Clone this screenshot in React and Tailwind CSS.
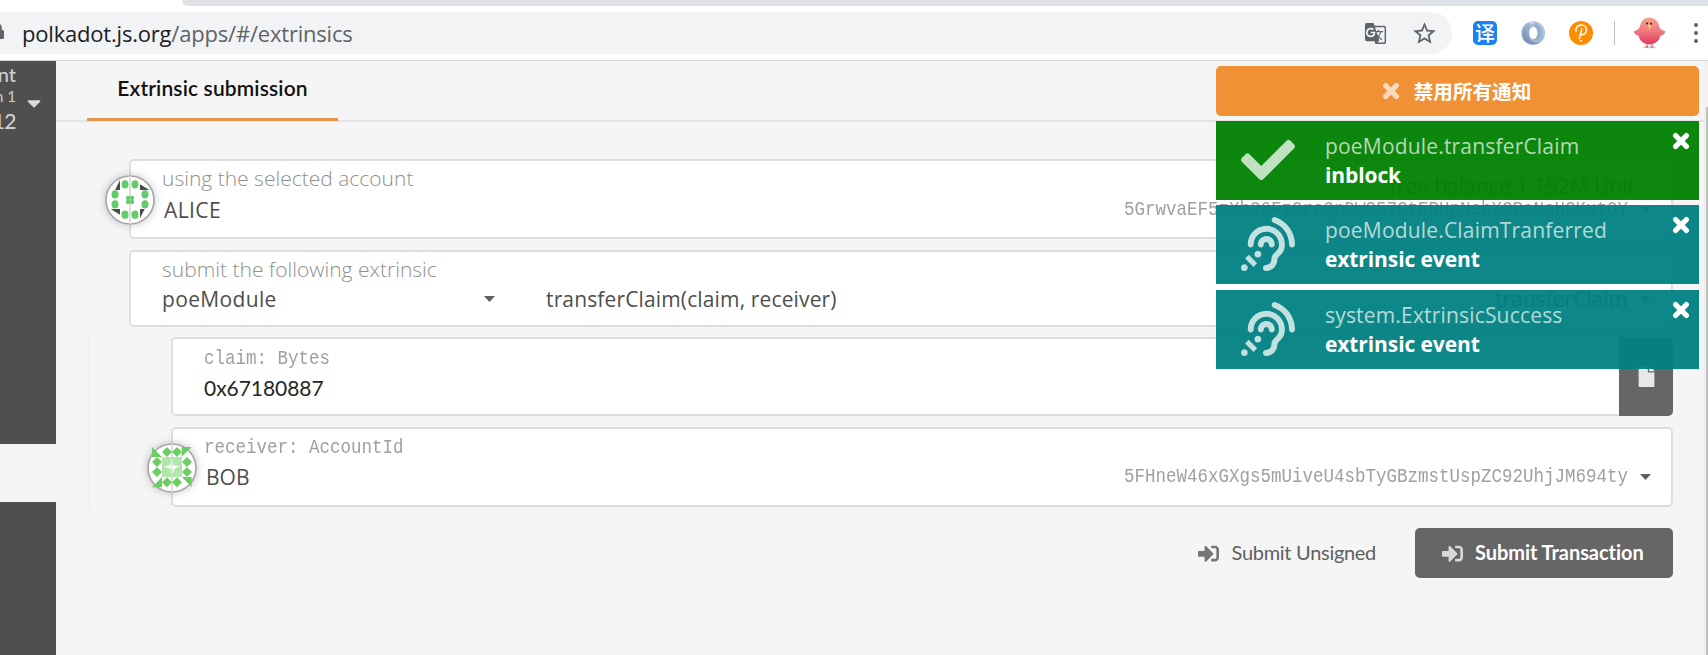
import React from "react";
import { FaAssistiveListeningSystems, FaCaretDown, FaCheck, FaFile, FaLock, FaSignInAlt } from "react-icons/fa";
import { MdGTranslate, MdStarBorder } from "react-icons/md";

function JsonOrb() {
  return (
    <svg viewBox="0 0 24 24" className="size-6">
      <defs>
        <linearGradient id="orbA" x1="0" y1="1" x2="1" y2="0">
          <stop offset="0" stopColor="#4d6f9c" />
          <stop offset="1" stopColor="#c9d8e8" />
        </linearGradient>
        <linearGradient id="orbB" x1="0" y1="0" x2="1" y2="1">
          <stop offset="0" stopColor="#d5e2ef" />
          <stop offset="1" stopColor="#9ab3d0" />
        </linearGradient>
      </defs>
      <circle cx="12" cy="12" r="12" fill="url(#orbB)" />
      <path d="M8 1.500C1 4-1 13 3.500 19.500C7 24 15 25 19 21C12 22 7 18 8 12C8 7 11 5 15 5C12 3 10 3 8 1.500Z" fill="url(#orbA)" opacity="0.8" />
      <path d="M14 1C21 4 23 11 19 18C17 20 14 20 12 19C17 17 18 10 14 6C12 4 12 2 14 1Z" fill="#86a4c9" opacity="0.65" />
      <ellipse cx="12.300" cy="12" rx="4" ry="6" fill="#fff" />
    </svg>
  );
}

function DotLogo() {
  return (
    <svg viewBox="0 0 24 24" className="size-6" fill="none" stroke="#fff" strokeLinecap="round">
      <circle cx="12" cy="12" r="12" fill="#ff8c00" stroke="none" />
      <path d="M7 10.500C6.200 6.500 9 4 12.300 4C15.500 4 17.500 6.300 17.500 9C17.500 12 15 14 12 13.800" strokeWidth="1.500" />
      <path d="M12.800 8L10.300 17.500" strokeWidth="1.500" />
      <circle cx="12" cy="19.800" r="1" fill="#fff" stroke="none" />
    </svg>
  );
}

function Bird() {
  return (
    <svg viewBox="0 0 33 32" className="h-8 w-[33px]">
      <defs>
        <linearGradient id="bird" x1="0" y1="0" x2="0" y2="1">
          <stop offset="0" stopColor="#f4a08c" />
          <stop offset="0.5" stopColor="#f07a80" />
          <stop offset="1" stopColor="#e2385e" />
        </linearGradient>
      </defs>
      <ellipse cx="16.500" cy="30.300" rx="7" ry="1" fill="#d8cccc" />
      <path d="M14 26V30M19 26V30M12.500 30H15M18 30H20.500" stroke="#d9506a" strokeWidth="1" fill="none" />
      <path d="M16.500 0.500C21.500 0.500 25 4 26 9C27 12.500 30 13.500 32.500 14.500C31 17.500 29 18.500 27.500 18.500C26.500 24 22 27.500 16.500 27.500C11 27.500 6.500 24 5.500 18.500C4 18.500 2 17.500 0.500 14.500C3 13.500 6 12.500 7 9C8 4 11.500 0.500 16.500 0.500Z" fill="url(#bird)" />
      <path d="M14.500 7.500L18.500 8L16.500 13.500Z" fill="#fbc66a" />
      <circle cx="14" cy="6.500" r="1" fill="#222" />
      <circle cx="18" cy="6.700" r="1" fill="#222" />
    </svg>
  );
}

const ALICE_DOTS = [[75, 50], [105, 50], [135, 80], [135, 110], [105, 141], [75, 141], [45, 110], [45, 80]];
const BOB_DIAMONDS = [[82, 53], [112, 53], [142, 83], [142, 113], [112, 144], [82, 144], [52, 113], [52, 83]];

function AliceIcon() {
  return (
    <svg viewBox="15 22 150 150" className="size-[50px] overflow-visible drop-shadow-[0_0_4px_rgba(0,0,0,0.22)]">
      <circle cx="90" cy="97" r="72" fill="#fff" stroke="#a9a5a9" strokeWidth="5" />
      <path d="M90 24V170" stroke="#dededf" strokeWidth="6" />
      <path d="M60 37V67H45ZM120 50V67H148ZM120 124H134L120 152ZM32 124H60V141Z" fill="#4a4a4a" />
      {ALICE_DOTS.map(([x, y]) => (
        <ellipse key={`${x}-${y}`} cx={x} cy={y} rx="10.500" ry="12.500" fill="#63cb6b" />
      ))}
      {[[84, 91], [96, 91], [84, 103], [96, 103]].map(([x, y]) => (
        <circle key={`${x}-${y}`} cx={x} cy={y} r="6.500" fill="#63cb6b" />
      ))}
    </svg>
  );
}

function BobIcon() {
  return (
    <svg viewBox="22 26 150 150" className="size-[50px] overflow-visible drop-shadow-[0_0_4px_rgba(0,0,0,0.22)]">
      <circle cx="97" cy="101" r="72" fill="#fff" stroke="#a9a5a9" strokeWidth="5" />
      <path d="M97 28V174" stroke="#dededf" strokeWidth="6" />
      <path d="M37 38L67 68H37ZM126 38H156L126 68ZM127 128H156V159ZM67 128V159H37Z" fill="#6ccd63" />
      {BOB_DIAMONDS.map(([x, y]) => (
        <path key={`${x}-${y}`} d={`M${x} ${y - 15}L${x + 15} ${y}L${x} ${y + 15}L${x - 15} ${y}Z`} fill="#6ccd63" />
      ))}
      <rect x="67" y="68" width="60" height="60" fill="#b2e6ad" />
      <path d="M97 70V92L120 96L104 103L97 122V104L74 98L92 92Z" fill="#fff" />
      <path d="M97 84V116" stroke="#dcefdc" strokeWidth="5" />
    </svg>
  );
}

function Cross({ className = "" }) {
  return (
    <svg viewBox="0 0 16 16" className={`shrink-0 ${className}`}>
      <path d="M3.200 3.200L12.800 12.800M12.800 3.200L3.200 12.800" stroke="currentColor" strokeWidth="4.600" strokeLinecap="round" />
    </svg>
  );
}

function BrowserBar() {
  return (
    <header className="flex h-[61px] shrink-0 flex-col border-b border-[#d5d7d9] bg-white">
      <div className="ml-[182px] h-1.5 shrink-0 rounded-bl-[10px] bg-[#dee1e6]" />
      <div className="flex flex-1 items-center">
        <div className="flex h-[42px] w-[1452px] items-center rounded-r-full bg-[#f1f3f4] text-[#5f6368]">
          <FaLock className="-ml-[11px] mb-1 size-4 shrink-0" />
          <div className="ml-[17px] flex-1 text-[22px] leading-[41px] tracking-[-0.2px]">
            <span className="text-[#202124]">polkadot.js.org</span>
            <span>/apps/#/extrinsics</span>
          </div>
          <MdGTranslate className="mr-[24px] size-[23px]" />
          <MdStarBorder className="mr-[14px] size-[27px]" />
        </div>
        <div className="ml-[21px] flex size-6 items-center justify-center rounded-[5px] bg-[#1b82f1] font-['Noto_Sans_CJK_SC',sans-serif] text-[20px] leading-6 font-medium text-white">
          译
        </div>
        <div className="ml-6"><JsonOrb /></div>
        <div className="ml-6"><DotLogo /></div>
        <div className="ml-[21px] h-6 w-px bg-[#b9bcc0]" />
        <div className="ml-[18px]"><Bird /></div>
        <div className="ml-7 flex flex-col gap-1">
          <span className="size-1 rounded-full bg-[#5f6368]" />
          <span className="size-1 rounded-full bg-[#5f6368]" />
          <span className="size-1 rounded-full bg-[#5f6368]" />
        </div>
      </div>
    </header>
  );
}

function Sidebar() {
  return (
    <aside className="flex w-14 shrink-0 flex-col font-[Lato,sans-serif] text-[#cfcfcf]">
      <div className="flex h-[383px] shrink-0 items-start bg-[#4f4f4f] pt-px">
        <div className="flex w-4 flex-col items-end overflow-hidden whitespace-nowrap">
          <span className="text-[20px] leading-6 font-medium">nt</span>
          <span className="text-[15px] leading-[20px]">n 1</span>
          <span className="text-[21px] leading-[30px] font-medium tracking-[-0.5px]">12</span>
        </div>
        <FaCaretDown className="mt-[30px] ml-[8px] h-[22px] w-[20px] text-[#dcdcdc]" />
      </div>
      <div className="h-[58px] shrink-0" />
      <div className="flex-1 bg-[#4f4f4f]" />
    </aside>
  );
}

function Mono({ children, className = "" }) {
  return (
    <div className={`font-['Liberation_Mono',monospace] text-[21px] leading-7 whitespace-nowrap text-[#a0a0a0] ${className}`}>{children}</div>
  );
}

function Caret({ className = "" }) {
  return (
    <svg viewBox="0 0 11 6" className={`h-1.5 w-[11px] shrink-0 ${className}`}>
      <path d="M0 0H11L5.500 6Z" fill="#5e5e5e" />
    </svg>
  );
}

function Address({ children }) {
  return (
    <div className="-mt-px flex items-center">
      <Mono className="w-[504px]">
        <div className="origin-left scale-x-[0.8333]">{children}</div>
      </Mono>
      <Caret className="ml-3" />
    </div>
  );
}

const box = "relative rounded-[5px] border-2 border-[#dededf] bg-white";
const label = "text-[21px] leading-7 font-light text-[#8f8f8f]";

function Toast({ tone, icon, title, text }) {
  return (
    <div className={`flex h-[79px] ${tone}`}>
      <div className="flex w-[109px] shrink-0 items-center pb-px pl-[25px] text-white/75">{icon}</div>
      <div className="flex-1 pt-[11px] text-[21px] leading-7 text-white">
        <div className="tracking-[0.18px] text-white/70">{title}</div>
        <div className="pt-px font-bold leading-7 tracking-[-0.1px]">{text}</div>
      </div>
      <Cross className="mt-[11px] mr-[9px] size-[18px] text-white" />
    </div>
  );
}

function Toasts() {
  return (
    <div className="absolute top-[66px] right-[9px] flex w-[483px] flex-col gap-[5px]">
      <div className="flex h-[50px] items-center justify-center gap-[14px] rounded-[5px] bg-[#f19135] pr-0.5 text-white">
        <Cross className="size-[18px] text-[#fadabb]" />
        <span className="font-['Noto_Sans_CJK_SC',sans-serif] text-[19.600px] leading-6 font-bold">禁用所有通知</span>
      </div>
      <Toast tone="bg-[#008000]/95" icon={<FaCheck className="size-[54px]" />} title="poeModule.transferClaim" text="inblock" />
      <Toast tone="bg-[#008080]/95" icon={<FaAssistiveListeningSystems className="size-[54px]" />} title="poeModule.ClaimTranferred" text="extrinsic event" />
      <Toast tone="bg-[#008080]/95 mt-px" icon={<FaAssistiveListeningSystems className="size-[54px]" />} title="system.ExtrinsicSuccess" text="extrinsic event" />
    </div>
  );
}

export default function App() {
  return (
    <div className="relative flex h-[655px] w-[1708px] flex-col overflow-hidden bg-[#f5f5f5] font-['Open_Sans','Noto_Sans_CJK_SC',sans-serif] text-[#4e4e4e]">
      <BrowserBar />
      <div className="flex min-h-0 flex-1">
        <Sidebar />
        <main className="flex flex-1 flex-col">
          <nav className="flex h-[61px] shrink-0 items-end border-b-2 border-[#e3e4e5] pl-[31px]">
            <div className="-mb-[1px] flex h-[61px] w-[251px] justify-center border-b-[3px] border-[#e3954d] pt-[14px] font-[Lato,sans-serif] text-[21px] leading-7 font-semibold tracking-[0.14px] text-[#111]">
              Extrinsic submission
            </div>
          </nav>
          <section className="flex flex-col pt-[37px] pr-[31px] pl-8">
            <div className={`${box} ml-[41px] flex h-20 flex-col gap-1 pt-[3px] pr-5 pl-[31px]`}>
              <div className="absolute top-[14px] -left-[26px]"><AliceIcon /></div>
              <div className="flex justify-between">
                <span className={label}>using the selected account</span>
              </div>
              <div className="flex items-center justify-between">
                <span className="pl-[2px] text-[21px] leading-7 tracking-[0.4px]">ALICE</span>
                <Address>5GrwvaEF5zXb26Fz9rcQpDWS57CtERHpNehXCPcNoHGKutQY</Address>
              </div>
              <div className="absolute top-[2px] right-9 text-[21px] leading-[46px] text-[#6f6f6f]">free balance 1.152M Unit</div>
            </div>

            <div className={`${box} mt-[11px] ml-[41px] flex h-[77px] flex-col gap-0.5 pt-[3px] pr-5 pl-[31px]`}>
              <span className={label}>submit the following extrinsic</span>
              <div className="flex items-center text-[21px] leading-7">
                <div className="flex w-[333px] items-center justify-between">
                  <span className="tracking-[0.35px]">poeModule</span>
                  <Caret />
                </div>
                <span className="ml-[51px] flex-1 tracking-[0.14px]">transferClaim(claim, receiver)</span>
                <span>transferClaim</span>
                <Caret className="ml-3" />
              </div>
            </div>

            <div className="mt-1.5 flex flex-col gap-[11px] border-l-[3px] border-[#f0f0f0] py-1 pl-20">
              <div className={`${box} flex h-[79px] flex-col gap-px pt-1.5 pl-[31px]`}>
                <Mono className="text-[#8f8f8f]">
                  <div className="origin-left scale-x-[0.8333]">claim: Bytes</div>
                </Mono>
                <span className="font-[Lato,sans-serif] text-[21px] leading-7 tracking-[-0.05px] text-[#262626]">0x67180887</span>
                <div className="absolute -top-0.5 -right-0.5 flex h-[79px] w-[54px] items-center justify-center rounded-r-[5px] bg-[#666]">
                  <FaFile className="size-[21px] text-white/85" />
                </div>
              </div>
              <div className={`${box} flex h-20 flex-col gap-0.5 pt-[5px] pr-5 pl-[31px]`}>
                <div className="absolute top-[14px] -left-[26px]"><BobIcon /></div>
                <Mono className="text-[#8f8f8f]">
                  <div className="origin-left scale-x-[0.8333]">receiver: AccountId</div>
                </Mono>
                <div className="-mt-px flex items-center justify-between">
                  <span className="pl-[2px] text-[21px] leading-7">BOB</span>
                  <Address>5FHneW46xGXgs5mUiveU4sbTyGBzmstUspZC92UhjJM694ty</Address>
                </div>
              </div>
            </div>

            <div className="mt-[17px] flex justify-end gap-[39px] font-[Lato,sans-serif] text-[20px] leading-[48px]">
              <button className="flex h-[50px] items-start gap-[13px] tracking-[-0.3px] text-[#5f5f5f]">
                <FaSignInAlt className="mt-[14.5px] size-[21px] text-[#757575]" />
                Submit Unsigned
              </button>
              <button className="flex h-[50px] w-[258px] items-start gap-[12px] rounded-[5px] bg-[#666] pl-[27px] font-bold tracking-[-0.05px] text-white">
                <FaSignInAlt className="mt-[14.5px] size-[21px] text-white/75" />
                Submit Transaction
              </button>
            </div>
          </section>
        </main>
        <div className="flex w-[4px] shrink-0 flex-col items-end bg-[#f1f1f1]">
          <div className="mt-[46px] w-0.5 flex-1 bg-[#c1c1c1]" />
        </div>
      </div>
      <Toasts />
    </div>
  );
}
